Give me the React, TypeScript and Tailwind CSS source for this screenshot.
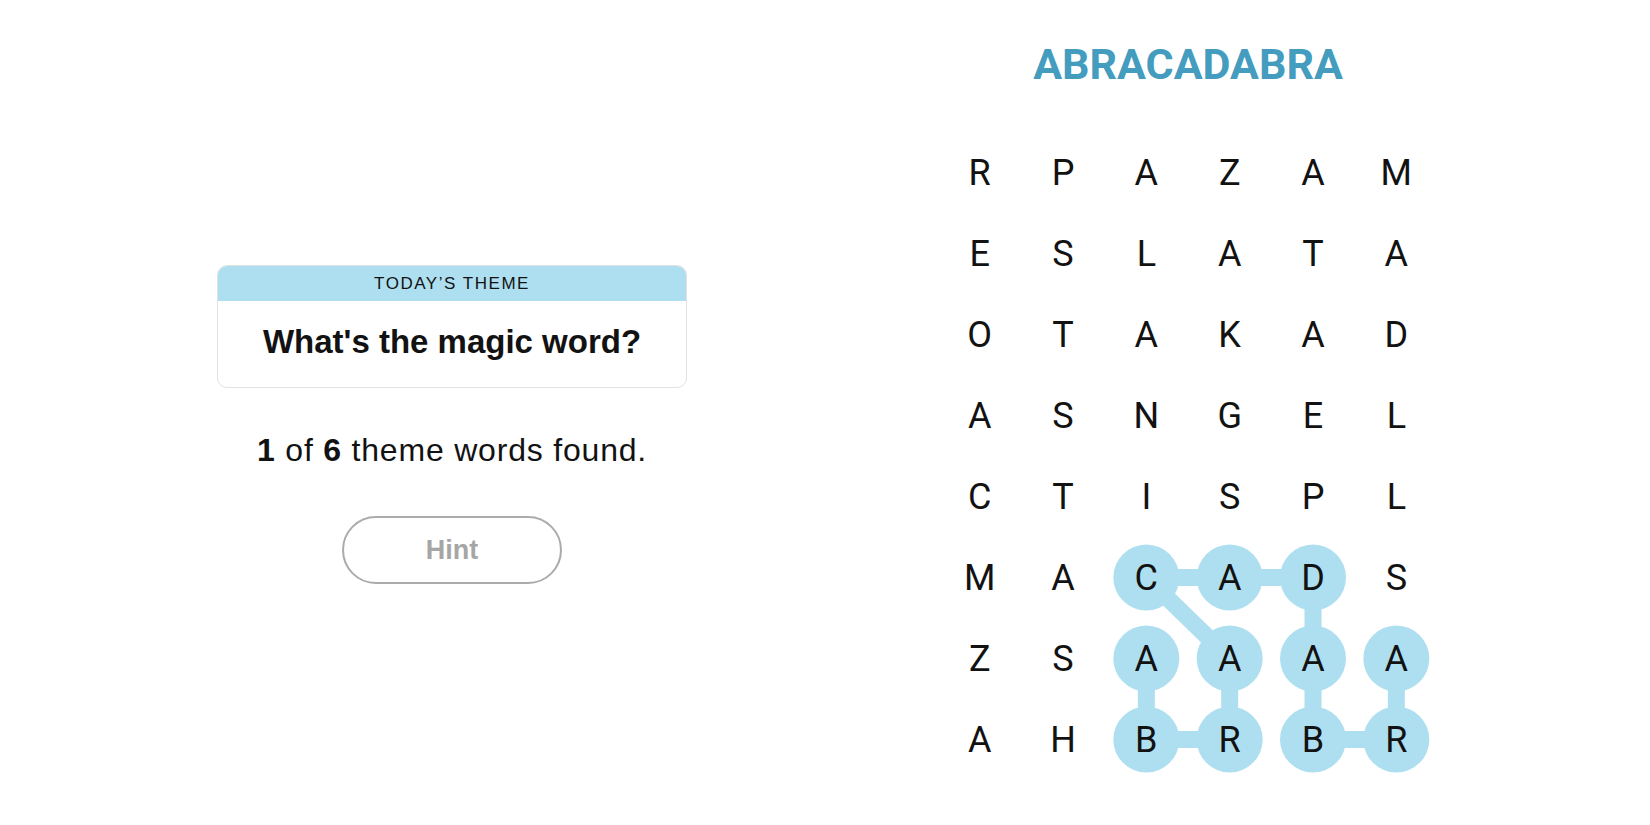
import React from "react";

const GRID = [
  "RPAZAM",
  "ESLATA",
  "OTAKAD",
  "ASNGEL",
  "CTISPL",
  "MACADS",
  "ZSAAAA",
  "AHBRBR",
];

// path of the found word, [row, col]
const FOUND: [number, number][] = [
  [6, 2], [7, 2], [7, 3], [6, 3], [5, 2], [5, 3], [5, 4], [6, 4], [7, 4], [7, 5], [6, 5],
];

const CW = 500 / 6;
const RH = 81;

function cx(c: number) { return c * CW + CW / 2; }
function cy(r: number) { return r * RH + RH / 2; }

export default function App() {
  return (
    <div className="w-[1650px] h-[825px] bg-white flex text-[#121212]" style={{ fontFamily: "'Liberation Sans', Arial, sans-serif" }}>
      {/* Left: theme + progress */}
      <div className="w-[904px] flex flex-col items-center pt-[265px]">
        <div className="w-[470px] rounded-[10px] border border-[#e2e2e2] overflow-hidden">
          <div className="h-[35px] bg-[#aedff0] flex items-center justify-center text-[17px] tracking-[0.09em]">
            TODAY’S THEME
          </div>
          <div className="h-[86px] pb-[5px] flex items-center justify-center text-[33px] font-bold">
            What's the magic word?
          </div>
        </div>

        <p className="mt-[46px] text-[32px] tracking-[0.025em] leading-none">
          <span className="font-bold">1</span> of <span className="font-bold">6</span> theme words found.
        </p>

        <button className="mt-[50px] w-[220px] h-[68px] rounded-full border-2 border-[#ababab] text-[#a6a6a6] text-[27px] font-bold">
          Hint
        </button>
      </div>

      {/* Right: board */}
      <div className="w-[568px] flex flex-col items-center pt-[43px]" style={{ fontFamily: "Roboto, 'Liberation Sans', sans-serif" }}>
        <h1 className="text-[43px] font-bold leading-none text-[#449cbe]">ABRACADABRA</h1>

        <div className="relative mt-[46px] w-[500px] h-[648px]">
          <svg className="absolute inset-0" width="500" height="648">
            {FOUND.slice(1).map(([r, c], i) => {
              const [pr, pc] = FOUND[i];
              return (
                <line key={i} x1={cx(pc)} y1={cy(pr)} x2={cx(c)} y2={cy(r)} stroke="#aedff0" strokeWidth="17" />
              );
            })}
            {FOUND.map(([r, c], i) => (
              <circle key={i} cx={cx(c)} cy={cy(r)} r="33" fill="#aedff0" />
            ))}
          </svg>
          <div className="relative grid grid-cols-6 grid-rows-8 w-full h-full">
            {GRID.flatMap((row, r) =>
              row.split("").map((ch, c) => (
                <div key={`${r}-${c}`} className="flex items-center justify-center text-[36px] leading-none text-[#121212]">
                  {ch}
                </div>
              ))
            )}
          </div>
        </div>
      </div>
    </div>
  );
}
